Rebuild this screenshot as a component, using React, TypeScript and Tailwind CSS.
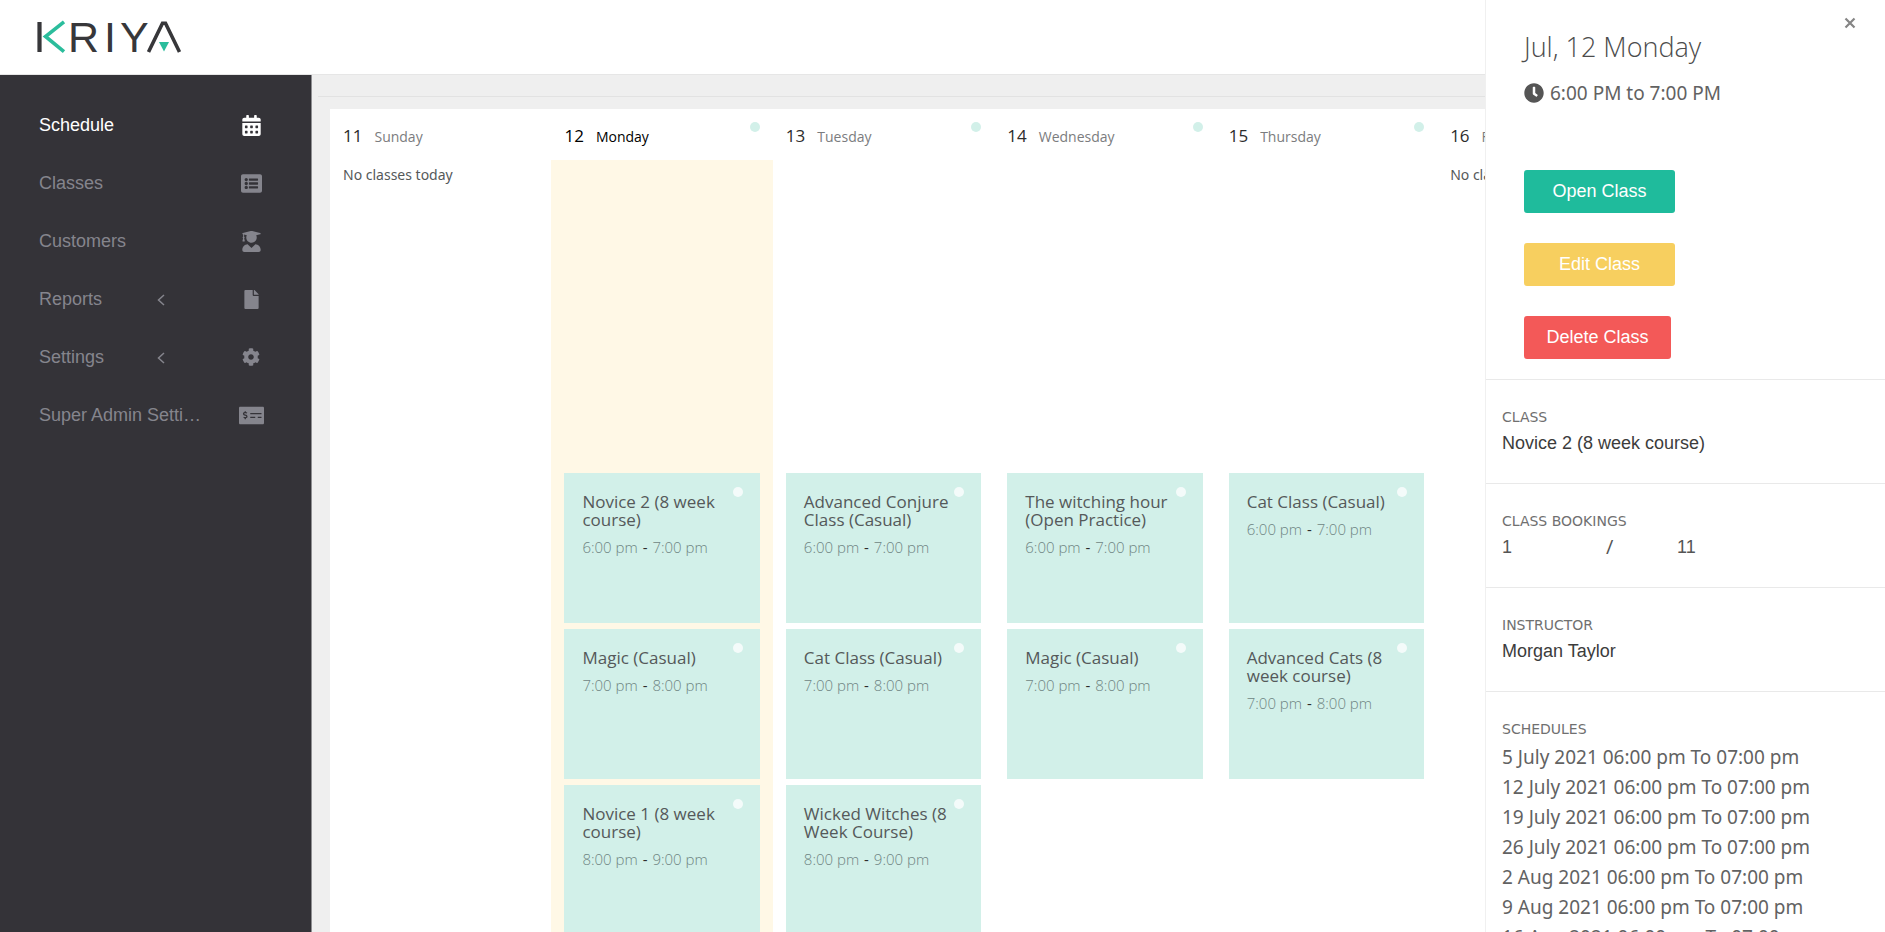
import type { ReactNode } from "react";
import {
  FaCalendarAlt,
  FaClock,
  FaCog,
  FaFile,
  FaListAlt,
  FaMoneyCheckAlt,
  FaUserGraduate,
} from "react-icons/fa";

type NavItem = { label: string; icon: ReactNode; active?: boolean; nested?: boolean };
type Session = { title: string; start: string; end: string };
type Day = { date: number; name: string; today?: boolean; sessions: Session[] };

const navItems: NavItem[] = [
  { label: "Schedule", icon: <FaCalendarAlt size={21} />, active: true },
  { label: "Classes", icon: <FaListAlt size={21} /> },
  { label: "Customers", icon: <FaUserGraduate size={21} /> },
  { label: "Reports", icon: <FaFile size={19} />, nested: true },
  { label: "Settings", icon: <FaCog size={18} />, nested: true },
  { label: "Super Admin Settings", icon: <FaMoneyCheckAlt size={25} /> },
];

const six = { start: "6:00 pm", end: "7:00 pm" };
const seven = { start: "7:00 pm", end: "8:00 pm" };
const eight = { start: "8:00 pm", end: "9:00 pm" };

const days: Day[] = [
  { date: 11, name: "Sunday", sessions: [] },
  {
    date: 12,
    name: "Monday",
    today: true,
    sessions: [
      { title: "Novice 2 (8 week course)", ...six },
      { title: "Magic (Casual)", ...seven },
      { title: "Novice 1 (8 week course)", ...eight },
    ],
  },
  {
    date: 13,
    name: "Tuesday",
    sessions: [
      { title: "Advanced Conjure Class (Casual)", ...six },
      { title: "Cat Class (Casual)", ...seven },
      { title: "Wicked Witches (8 Week Course)", ...eight },
    ],
  },
  {
    date: 14,
    name: "Wednesday",
    sessions: [
      { title: "The witching hour (Open Practice)", ...six },
      { title: "Magic (Casual)", ...seven },
    ],
  },
  {
    date: 15,
    name: "Thursday",
    sessions: [
      { title: "Cat Class (Casual)", ...six },
      { title: "Advanced Cats (8 week course)", ...seven },
    ],
  },
  { date: 16, name: "Friday", sessions: [] },
  { date: 17, name: "Saturday", sessions: [] },
];

const scheduleDates = ["5 July", "12 July", "19 July", "26 July", "2 Aug", "9 Aug", "16 Aug"];

function Logo() {
  return (
    <svg width="150" height="60" viewBox="0 -13 150 60" role="img" aria-label="Kriya">
      <g fill="none" strokeWidth="3.600">
        <path d="M3.500 2V32" stroke="#37373a" strokeWidth="4.200" />
        <path d="M28 1.800L9.500 16.500L28 31.600" stroke="#2bbd9c" />
        <path d="M112.500 32L126.500 3.300H129.500L143.500 32" stroke="#37373a" />
      </g>
      <path d="M123 22H133L128 31.500Z" fill="#2bbd9c" />
      <g fill="#37373a" fontFamily="Liberation Sans, Arial, sans-serif" fontSize="43">
        <text x="32" y="32">R</text>
        <text x="68" y="32">I</text>
        <text x="84" y="32">Y</text>
      </g>
    </svg>
  );
}

function Sidebar() {
  return (
    <nav className="w-[312px] shrink-0 border-r border-[#8f8f92] bg-[#343338] pt-[21px]">
      <ul>
        {navItems.map((item) => (
          <li key={item.label}>
            <a
              href="#"
              className={`flex h-[58px] items-center pr-10 pl-[39px] text-[18px] ${
                item.active ? "text-white" : "text-[#85858d]"
              }`}
            >
              <span className="w-[168px] truncate">
                <span className={item.nested ? "inline-block w-[118px]" : ""}>{item.label}</span>
                {item.nested && (
                  <svg width="8" height="12" viewBox="0 0 8 12" className="inline-block" aria-hidden="true">
                    <path d="M7 1L1.500 6L7 11" fill="none" stroke="currentColor" strokeWidth="1.500" />
                  </svg>
                )}
              </span>
              <span className="ml-auto flex w-10 justify-center">{item.icon}</span>
            </a>
          </li>
        ))}
      </ul>
    </nav>
  );
}

function SessionCard({ session }: { session: Session }) {
  return (
    <article className="relative h-[150px] bg-[#d2f0e9] px-[18px] pt-5 font-['Open_Sans',sans-serif]">
      <span className="absolute top-[14px] right-[17px] size-[10px] rounded-full bg-[#f4fbfa]" />
      <h3 className="text-[17px] leading-[18px] text-[#55595a]">{session.title}</h3>
      <p className="mt-2 text-[15px] leading-5 font-light text-[#6f8583]">
        {session.start} <span className="mx-px font-normal text-[#2c2c2c]">-</span> {session.end}
      </p>
    </article>
  );
}

function DayColumn({ day }: { day: Day }) {
  return (
    <section className="flex flex-col font-['Open_Sans',sans-serif]">
      <header
        className={`relative flex h-[51px] items-baseline gap-3 px-[13px] pt-[15px] leading-6 ${
          day.today ? "text-black" : "text-[#7b7c7e]"
        }`}
      >
        <span className={day.today ? "text-[17px] text-black" : "text-[17px] text-[#2c2c2c]"}>
          {day.date}
        </span>
        <span className="text-[14px]">{day.name}</span>
        {day.sessions.length > 0 && (
          <span className="absolute top-[13px] right-[13px] size-[10px] rounded-full bg-[#d2f0e9]" />
        )}
      </header>
      <div className={`grow px-[13px] ${day.today ? "bg-[#fff8e6]" : ""}`}>
        {day.sessions.length === 0 ? (
          <p className="pt-[3px] font-['Noto_Sans',sans-serif] text-[14px] leading-6 text-[#55595a]">
            No classes today
          </p>
        ) : (
          <div className="flex flex-col gap-[6px] pt-[313px]">
            {day.sessions.map((session) => (
              <SessionCard key={session.title} session={session} />
            ))}
          </div>
        )}
      </div>
    </section>
  );
}

function PanelSection({ label, children }: { label: string; children: ReactNode }) {
  return (
    <section className="border-t border-[#e9e9e9] px-4 pt-[27px] pb-7">
      <h3 className="font-['DejaVu_Sans',sans-serif] text-[14px] leading-5 text-[#707070] uppercase">
        {label}
      </h3>
      {children}
    </section>
  );
}

function DetailPanel() {
  const button = "h-[43px] rounded-[3px] text-[18px] text-white";
  return (
    <aside className="absolute inset-y-0 right-0 w-[400px] overflow-hidden border-l border-[#f0f0f0] bg-white">
      <button
        type="button"
        aria-label="Close"
        className="absolute top-[13px] right-[25px] flex size-5 items-center justify-center text-[#858585]"
      >
        <svg width="12" height="12" viewBox="0 0 12 12" aria-hidden="true">
          <path d="M1.500 1.500L10.500 10.500M10.500 1.500L1.500 10.500" stroke="currentColor" strokeWidth="2.200" />
        </svg>
      </button>
      <div className="flex flex-col items-start px-[38px] pt-[29px] pb-5">
        <h2 className="font-['Open_Sans',sans-serif] text-[27px] leading-9 font-light text-[#4c4c4c]">
          Jul, 12 Monday
        </h2>
        <p className="mt-[14px] flex items-center gap-[6px] font-['Noto_Sans',sans-serif] text-[19px] leading-7 text-[#626262]">
          <FaClock size={20} className="text-[#555]" />
          6:00 PM to 7:00 PM
        </p>
        <div className="mt-[63px] flex flex-col items-start gap-[30px]">
          <button type="button" className={`${button} w-[151px] bg-[#1fbb9c]`}>Open Class</button>
          <button type="button" className={`${button} w-[151px] bg-[#f7cf5f]`}>Edit Class</button>
          <button type="button" className={`${button} w-[147px] bg-[#f35958]`}>Delete Class</button>
        </div>
      </div>
      <PanelSection label="Class">
        <p className="mt-1 text-[18px] leading-6 text-[#3c3c3c]">Novice 2 (8 week course)</p>
      </PanelSection>
      <PanelSection label="Class Bookings">
        <p className="mt-1 flex text-[18px] leading-6 text-[#555]">
          <span className="w-[104px]">1</span>
          <span className="w-[71px] font-['Open_Sans',sans-serif] text-[20px]">/</span>
          <span>11</span>
        </p>
      </PanelSection>
      <PanelSection label="Instructor">
        <p className="mt-1 text-[18px] leading-6 text-[#3c3c3c]">Morgan Taylor</p>
      </PanelSection>
      <PanelSection label="Schedules">
        <ul className="mt-[3px] font-['Noto_Sans',sans-serif] text-[19px] leading-[30px] whitespace-nowrap text-[#626262]">
          {scheduleDates.map((date) => (
            <li key={date}>{date} 2021 06:00 pm To 07:00 pm</li>
          ))}
        </ul>
      </PanelSection>
    </aside>
  );
}

export default function App() {
  return (
    <div className="relative flex h-screen flex-col overflow-hidden bg-[#efefef] font-['Liberation_Sans',Arial,sans-serif]">
      <header className="flex h-[75px] shrink-0 items-center border-b border-[#e6e6e6] bg-white pl-9">
        <Logo />
      </header>
      <div className="flex min-h-0 grow">
        <Sidebar />
        <main className="flex min-w-0 grow flex-col pt-[21px] pl-[6px]">
          <div className="shrink-0 border-t border-[#e2e2e2] pb-3" />
          <div className="ml-3 grid min-h-0 grow grid-cols-7 overflow-hidden bg-white pr-[5px]">
            {days.map((day) => (
              <DayColumn key={day.date} day={day} />
            ))}
          </div>
        </main>
      </div>
      <DetailPanel />
    </div>
  );
}
